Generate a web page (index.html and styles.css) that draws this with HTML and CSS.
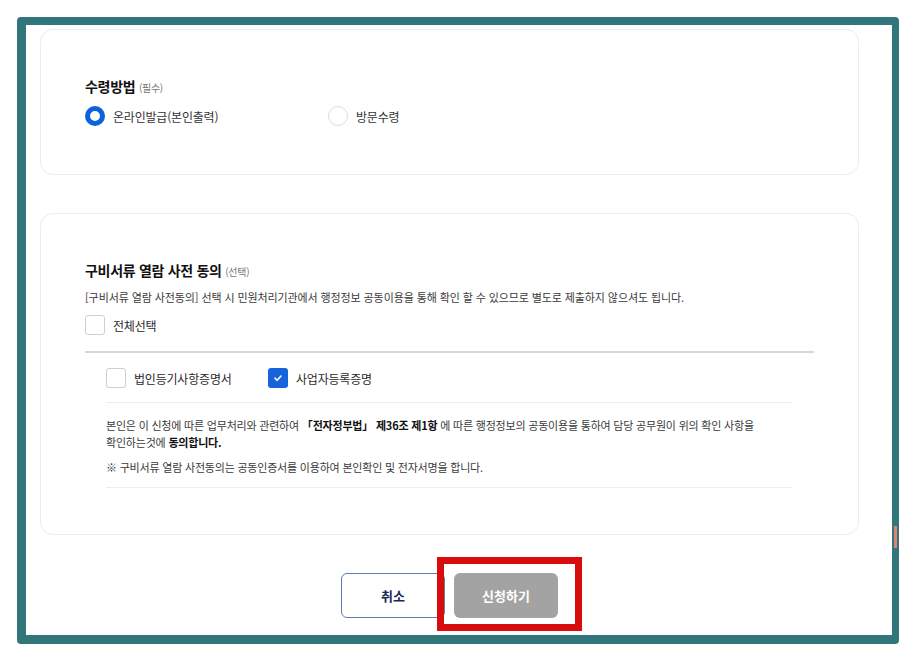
FILE: index.html
```html
<!DOCTYPE html>
<html lang="ko">
<head>
    <meta charset="UTF-8">
    <meta name="viewport" content="width=device-width, initial-scale=1.0">
    <title>구비서류 신청</title>
    <link rel="stylesheet" href="styles.css">
</head>
<body>

<div class="frame">
    <span class="edge-mark"></span>

    <div class="card card-receive">
        <h3 class="card-title">수령방법 <small>(필수)</small></h3>
        <div class="radio-row">
            <label class="radio checked"><span class="dot"></span>온라인발급(본인출력)</label>
            <label class="radio"><span class="dot"></span>방문수령</label>
        </div>
    </div>

    <div class="card card-agree">
        <h3 class="card-title">구비서류 열람 사전 동의 <small>(선택)</small></h3>
        <p class="desc">[구비서류 열람 사전동의] 선택 시 민원처리기관에서 행정정보 공동이용을 통해 확인 할 수 있으므로 별도로 제출하지 않으셔도 됩니다.</p>
        <label class="check check-all"><span class="box"></span>전체선택</label>

        <div class="doc-list">
            <div class="doc-row">
                <label class="check"><span class="box"></span>법인등기사항증명서</label>
                <label class="check checked"><span class="box">
                    <svg width="12" height="12" viewBox="0 0 12 12"><path d="M3 6.2 L5.2 8.3 L9 4" fill="none" stroke="#fff" stroke-width="1.6" stroke-linecap="round" stroke-linejoin="round"/></svg>
                </span>사업자등록증명</label>
            </div>
            <div class="notice">
                <p>본인은 이 신청에 따른 업무처리와 관련하여 <b>「전자정부법」 제36조 제1항</b> 에 따른 행정정보의 공동이용을 통하여 담당 공무원이 위의 확인 사항을<br>확인하는것에 <b>동의합니다.</b></p>
                <p class="note">※ 구비서류 열람 사전동의는 공동인증서를 이용하여 본인확인 및 전자서명을 합니다.</p>
            </div>
        </div>
    </div>

    <div class="btn-row">
        <button class="btn btn-cancel">취소</button>
        <span class="highlight">
            <button class="btn btn-submit">신청하기</button>
        </span>
    </div>
</div>

</body>
</html>
```

FILE: styles.css
```css
body {
    margin: 0;
    background-color: #fff;
    font-family: 'Noto Sans CJK KR', 'Noto Sans', sans-serif;
    color: #333;
}
.frame {
    position: relative;
    box-sizing: border-box;
    margin: 17px 0 0 17px;
    width: 882px;
    height: 627px;
    border: solid #30767b;
    border-width: 8px 7px 9px 9px;
    border-radius: 4px;
    padding: 4px 0 0 14px;
}
.edge-mark {
    position: absolute;
    right: -5px;
    top: 501px;
    width: 3px;
    height: 22px;
    background-color: #e08270;
}
.card {
    box-sizing: border-box;
    width: 819px;
    border: 1px solid #e7ecf8;
    border-radius: 13px;
    padding: 0 44px;
}
.card-receive {
    height: 146px;
    padding-top: 46px;
}
.card-agree {
    height: 322px;
    margin-top: 38px;
    padding-top: 46px;
}
.card-title {
    margin: 0;
    font-size: 14px;
    font-weight: bold;
    color: #111;
    line-height: 20px;
    letter-spacing: -0.3px;
}
.card-title small {
    font-size: 10px;
    font-weight: normal;
    color: #777;
}
.radio-row {
    display: flex;
    margin-top: 8px;
}
.radio {
    display: flex;
    align-items: center;
    width: 243px;
    font-size: 12px;
    color: #333;
    letter-spacing: -0.2px;
}
.radio .dot {
    box-sizing: border-box;
    width: 20px;
    height: 20px;
    border-radius: 50%;
    border: 1px solid #ddd;
    margin-right: 8px;
}
.radio.checked .dot {
    border: 5px solid #0b62db;
}
.desc {
    margin: 7px 0 0;
    font-size: 11px;
    line-height: 16px;
    color: #3a3a3a;
    letter-spacing: -0.1px;
}
.check {
    display: flex;
    align-items: center;
    font-size: 12px;
    color: #2a2a2a;
    letter-spacing: -0.2px;
}
.check .box {
    box-sizing: border-box;
    display: flex;
    justify-content: center;
    align-items: center;
    width: 20px;
    height: 20px;
    border: 1px solid #cfcfcf;
    border-radius: 3px;
    margin-right: 8px;
}
.check.checked .box {
    border: none;
    background-color: #1564d9;
}
.check-all {
    margin-top: 10px;
}
.doc-list {
    margin-top: 16px;
    border-top: 2px solid #d6d6d6;
    padding: 0 22px 0 21px;
}
.doc-row {
    display: flex;
    padding: 15px 0 14px;
    border-bottom: 1px solid #ececec;
}
.doc-row .check {
    width: 162px;
}
.notice {
    padding: 14px 0 11px;
    border-bottom: 1px solid #ececec;
}
.notice p {
    margin: 0;
    font-size: 11px;
    line-height: 17px;
    color: #3a3a3a;
    letter-spacing: -0.2px;
}
.notice b {
    color: #111;
}
.notice .note {
    margin-top: 8px;
}
.btn-row {
    display: flex;
    gap: 9px;
    margin-top: 38px;
    padding-left: 301px;
}
.btn {
    box-sizing: border-box;
    width: 104px;
    height: 45px;
    border-radius: 6px;
    font-family: inherit;
    font-size: 13px;
    font-weight: bold;
    cursor: pointer;
}
.btn-cancel {
    background-color: #fff;
    border: 1.5px solid #5d7db6;
    color: #1b2a55;
}
.btn-submit {
    background-color: #a3a3a3;
    border: none;
    color: #fff;
}
.highlight {
    position: relative;
    display: block;
}
.highlight::after {
    content: '';
    position: absolute;
    top: -16px;
    left: -17px;
    right: -24px;
    bottom: -13px;
    border: 7px solid #d80c0c;
    pointer-events: none;
}
```
